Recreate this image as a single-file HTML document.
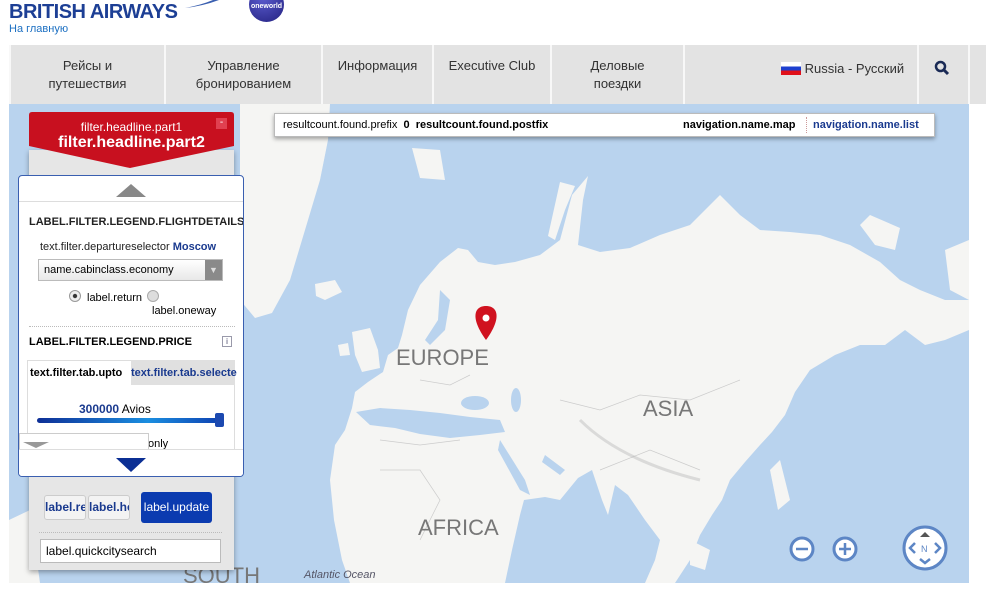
<!DOCTYPE html>
<html><head><meta charset="utf-8"><style>
*{margin:0;padding:0;box-sizing:border-box}
body{width:986px;height:595px;background:#fff;font-family:"Liberation Sans",Arial,sans-serif;position:relative;overflow:hidden}
.a{position:absolute}
.nav{left:9px;top:45px;width:977px;height:59px;background:#e3e3e3}
.ni{position:absolute;top:12px;font-size:13px;color:#333;text-align:center;line-height:18px}
.sep{position:absolute;top:0;width:2px;height:59px;background:#f8f8f8}
.b{font-weight:bold}
</style></head><body>
<div class="a" style="left:9px;top:1px;font-size:20px;font-weight:bold;color:#1d3f95;letter-spacing:-0.5px">BRITISH AIRWAYS</div>
<svg class="a" style="left:183px;top:0" width="40" height="10"><path d="M2 8 Q20 6 36 0 L30 0 Q18 5 2 8Z" fill="#3a5fb0"/></svg>
<div class="a" style="left:9px;top:23px;font-size:11px;color:#1b6fc2">На главную</div>
<div class="a" style="left:249px;top:-13px;width:35px;height:35px;border-radius:50%;background:radial-gradient(circle at 40% 30%,#5b5ccf,#22207e);color:#fff;font-size:7px;font-weight:bold;text-align:center;padding-top:16px">oneworld</div>

<div class="a nav">
<div class="sep" style="left:0"></div>
<div class="sep" style="left:155px"></div>
<div class="sep" style="left:312px"></div>
<div class="sep" style="left:423px"></div>
<div class="sep" style="left:541px"></div>
<div class="sep" style="left:674px"></div>
<div class="sep" style="left:908px"></div>
<div class="sep" style="left:959px"></div>
<div class="ni" style="left:2px;width:153px">Рейсы и<br>путешествия</div>
<div class="ni" style="left:157px;width:155px">Управление<br>бронированием</div>
<div class="ni" style="left:314px;width:109px">Информация</div>
<div class="ni" style="left:425px;width:116px">Executive Club</div>
<div class="ni" style="left:543px;width:131px">Деловые<br>поездки</div>
<div class="ni" style="left:772px;top:15px;text-align:left"><span style="display:inline-block;width:20px;height:13px;vertical-align:-2px;background:linear-gradient(#fff 33%,#1d3fcf 33% 66%,#e0101a 66%)"></span> Russia - Русский</div>
<svg class="a" style="left:925px;top:15px" width="16" height="16"><circle cx="6.5" cy="6.5" r="4.5" fill="none" stroke="#1a2a55" stroke-width="2.5"/><path d="M10 10 L14 14" stroke="#1a2a55" stroke-width="3"/></svg>
</div>

<svg class="a" style="left:9px;top:104px" width="960" height="479" viewBox="9 104 960 479">
<rect x="9" y="104" width="960" height="479" fill="#f5f5f3"/>
<g fill="#b9d3ee">
<path d="M9 104 L969 104 L969 300 L945 300 L920 290 L900 280 L880 262 L850 245 L820 235 L790 232 L760 230 L740 215 L720 195 L705 210 L690 225 L660 235 L630 248 L600 252 L578 245 L583 200 L588 176 L572 195 L560 240 L540 255 L515 262 L495 265 L478 262 L468 250 L458 248 L440 262 L420 285 L408 310 L402 335 L398 348 L388 355 L383 372 L368 382 L355 392 L352 408 L345 430 L335 445 L330 480 L334 520 L342 560 L350 583 L9 583Z"/>
<path d="M969 330 L945 340 L925 345 L905 330 L885 345 L860 345 L835 355 L810 370 L795 392 L785 415 L772 432 L760 445 L745 462 L730 480 L722 500 L712 515 L700 535 L690 560 L675 583 L969 583Z"/>
<path d="M505 583 L512 550 L520 515 L524 500 L545 497 L560 500 L578 478 L592 470 L602 500 L608 515 L615 485 L628 495 L645 520 L660 540 L655 560 L645 583Z"/>
<path d="M356 412 L380 408 L410 410 L440 413 L470 417 L500 420 L505 432 L480 435 L450 438 L420 434 L395 428 L370 425Z"/>
<ellipse cx="475" cy="403" rx="14" ry="7"/>
<ellipse cx="516" cy="400" rx="5" ry="12"/>
<path d="M500 440 L525 480 L530 495 L520 490 L498 450Z"/>
<path d="M545 455 L565 470 L560 475 L542 462Z"/>
<path d="M430 345 L445 330 L450 300 L440 290 L438 320 L425 340Z"/>
<path d="M395 300 L405 300 L400 330 L392 330Z"/>
</g>
<g fill="#f5f5f3">
<path d="M240 104 L330 104 L328 140 L320 180 L305 230 L290 280 L272 313 L255 318 L240 300Z"/>
<path d="M315 284 L335 280 L342 292 L325 300 L316 296Z"/>
<path d="M352 332 L370 328 L378 350 L380 368 L362 372 L355 355Z"/>
<path d="M338 345 L348 343 L350 355 L340 356Z"/>
<path d="M560 182 L575 186 L565 210 L555 240 L548 236Z"/>
<path d="M412 148 L440 150 L445 180 L420 178Z"/>
<path d="M860 225 L870 215 L900 228 L895 250 L875 245Z"/>
<path d="M870 300 L895 285 L905 305 L885 345 L872 330Z"/>
<path d="M945 250 L969 240 L969 300 L950 290Z"/>
<path d="M9 520 L30 510 L40 583 L9 583Z"/>
<path d="M770 470 L780 460 L790 500 L778 510Z"/>
<path d="M690 540 L710 550 L705 570 L690 565Z"/>
</g>
<g stroke="#ccc" stroke-width="0.7" fill="none"><path d="M560 400 L600 410 L640 395 L690 400 L740 380"/><path d="M600 470 L650 450 L700 470"/><path d="M380 470 L420 470 L440 500 L420 540"/><path d="M380 440 L420 445 L460 440"/><path d="M420 380 L450 385 L470 375"/></g>
<path d="M580 420 Q620 460 700 480" stroke="#aaa" stroke-width="3" fill="none" opacity="0.35"/>
<g fill="#777" font-size="22" font-family="Liberation Sans,sans-serif"><text x="396" y="365">EUROPE</text><text x="643" y="416">ASIA</text><text x="418" y="535">AFRICA</text><text x="183" y="583">SOUTH</text></g>
<text x="304" y="578" font-size="11" font-style="italic" fill="#556">Atlantic Ocean</text>
<path d="M486 340 C470 318 474 306 486 306 C498 306 502 318 486 340Z" fill="#d0121f"/><circle cx="486" cy="318" r="3.5" fill="#fff"/>
<g fill="#fff" stroke="#5d86c5" stroke-width="3"><circle cx="802" cy="549" r="11"/><circle cx="845" cy="549" r="11"/><circle cx="925" cy="548" r="21"/></g>
<g stroke="#5d86c5" stroke-width="2.5" fill="none"><path d="M796 549h12M839 549h12M845 543v12M915 543l-5 5 5 5M935 543l5 5-5 5M920 559l5 4 5-4"/></g>
<path d="M920 537l5-5 5 5Z" fill="#555"/><text x="921" y="552" font-size="9" fill="#5d86c5">N</text>
</svg>

<div class="a" style="left:274px;top:113px;width:661px;height:24px;background:#fff;border:1px solid #bbb;box-shadow:0 2px 4px rgba(0,0,0,.35);font-size:11px;line-height:22px">
<span class="a" style="left:8px">resultcount.found.prefix <b>&nbsp;0&nbsp; resultcount.found.postfix</b></span>
<span class="a b" style="left:408px">navigation.name.map</span>
<span class="a" style="left:531px;top:3px;height:16px;border-left:1px dotted #c99"></span>
<span class="a b" style="left:538px;color:#1a3a8f">navigation.name.list</span>
</div>

<div class="a" style="left:29px;top:150px;width:205px;height:420px;background:#e6e6e6;box-shadow:0 2px 5px rgba(0,0,0,.35)"></div>
<svg class="a" style="left:29px;top:112px" width="205" height="60"><path d="M3 0 H202 Q205 0 205 3 V34 L101 56 L0 34 V3 Q0 0 3 0Z" fill="#c8101f"/></svg>
<div class="a" style="left:29px;top:120px;width:205px;text-align:center;color:#fff;font-size:12px">filter.headline.part1</div>
<div class="a" style="left:29px;top:134px;width:205px;text-align:center;color:#fff;font-size:16px;font-weight:bold">filter.headline.part2</div>
<div class="a" style="left:216px;top:118px;width:11px;height:11px;background:#e04050;color:#fff;font-size:10px;line-height:9px;text-align:center">-</div>

<div class="a" style="left:18px;top:175px;width:226px;height:302px;background:#fff;border:1px solid #3a5fb0;border-radius:4px;overflow:hidden">
<svg class="a" style="left:97px;top:8px" width="30" height="14"><path d="M0 13 L15 0 L30 13Z" fill="#888"/></svg>
<div class="a" style="left:0;top:25px;width:226px;border-top:1px solid #ddd"></div>
<div class="a b" style="left:10px;top:40px;font-size:11px;color:#222;white-space:nowrap">LABEL.FILTER.LEGEND.FLIGHTDETAILS</div>
<div class="a" style="left:21px;top:65px;font-size:11px;color:#222">text.filter.departureselector <b style="color:#1a3a8f">Moscow</b></div>
<div class="a" style="left:19px;top:83px;width:185px;height:22px;border:1px solid #bbb;background:linear-gradient(#fff,#e8e8e8);font-size:11px;line-height:20px;padding-left:5px">name.cabinclass.economy<span class="a" style="right:0;top:0;width:17px;height:20px;background:#8a8a8a;color:#ddd;text-align:center;font-size:9px">▼</span></div>
<div class="a" style="left:50px;top:114px;width:12px;height:12px;border-radius:50%;border:1px solid #999;background:radial-gradient(#333 25%,#eee 35%)"></div>
<div class="a" style="left:68px;top:116px;font-size:11px">label.return</div>
<div class="a" style="left:128px;top:114px;width:12px;height:12px;border-radius:50%;border:1px solid #aaa;background:#ddd"></div>
<div class="a" style="left:133px;top:129px;font-size:11px">label.oneway</div>
<div class="a" style="left:10px;top:150px;width:206px;border-top:1px dotted #bbb"></div>
<div class="a b" style="left:10px;top:160px;font-size:11px">LABEL.FILTER.LEGEND.PRICE</div>
<div class="a" style="left:203px;top:160px;width:10px;height:11px;border:1px solid #99a;font-size:8px;text-align:center;color:#446">i</div>
<div class="a" style="left:8px;top:184px;width:208px;height:90px;border:1px solid #ddd"></div>
<div class="a" style="left:112px;top:184px;width:104px;height:25px;background:#e0e0e0"></div>
<div class="a b" style="left:11px;top:191px;font-size:11px">text.filter.tab.upto</div>
<div class="a b" style="left:112px;top:191px;font-size:11px;color:#1a3a8f;white-space:nowrap">text.filter.tab.selecte</div>
<div class="a" style="left:60px;top:226px;font-size:12px"><b style="color:#1a3a8f">300000</b> Avios</div>
<div class="a" style="left:18px;top:242px;width:185px;height:5px;border-radius:3px;background:linear-gradient(90deg,#0e2f96,#1b8ee0 60%,#0e40b0)"></div>
<div class="a" style="left:196px;top:237px;width:9px;height:14px;background:#1c49b0;border-radius:2px"></div>
<div class="a" style="left:129px;top:262px;font-size:11px">only</div>
<div class="a" style="left:0;top:257px;width:130px;height:20px;background:#fff;border:1px solid #ccc"></div>
<svg class="a" style="left:4px;top:266px" width="26" height="6"><path d="M0 0H26L13 6Z" fill="#999"/></svg>
<div class="a" style="left:0;top:273px;width:226px;height:30px;background:#fff;border-top:1px solid #ddd"></div>
<svg class="a" style="left:97px;top:282px" width="30" height="14"><path d="M0 0H30L15 14Z" fill="#0b2f94"/></svg>
</div>

<div class="a b" style="left:44px;top:495px;width:42px;height:25px;border:1px solid #ccc;border-radius:3px;background:#f3f3f3;font-size:12px;color:#1a3a8f;line-height:23px;overflow:hidden;white-space:nowrap">label.reset</div>
<div class="a b" style="left:88px;top:495px;width:42px;height:25px;border:1px solid #ccc;border-radius:3px;background:#f3f3f3;font-size:12px;color:#1a3a8f;line-height:23px;white-space:nowrap;overflow:hidden">label.help</div>
<div class="a" style="left:141px;top:492px;width:71px;height:31px;border-radius:3px;background:#0b3bb0;color:#fff;font-size:12px;line-height:31px;text-align:center">label.update</div>
<div class="a" style="left:39px;top:532px;width:183px;border-top:1px dotted #bbb"></div>
<div class="a" style="left:40px;top:539px;width:181px;height:24px;border:1px solid #bbb;background:#fff;font-size:12px;line-height:22px;padding-left:5px">label.quickcitysearch</div>
</body></html>
